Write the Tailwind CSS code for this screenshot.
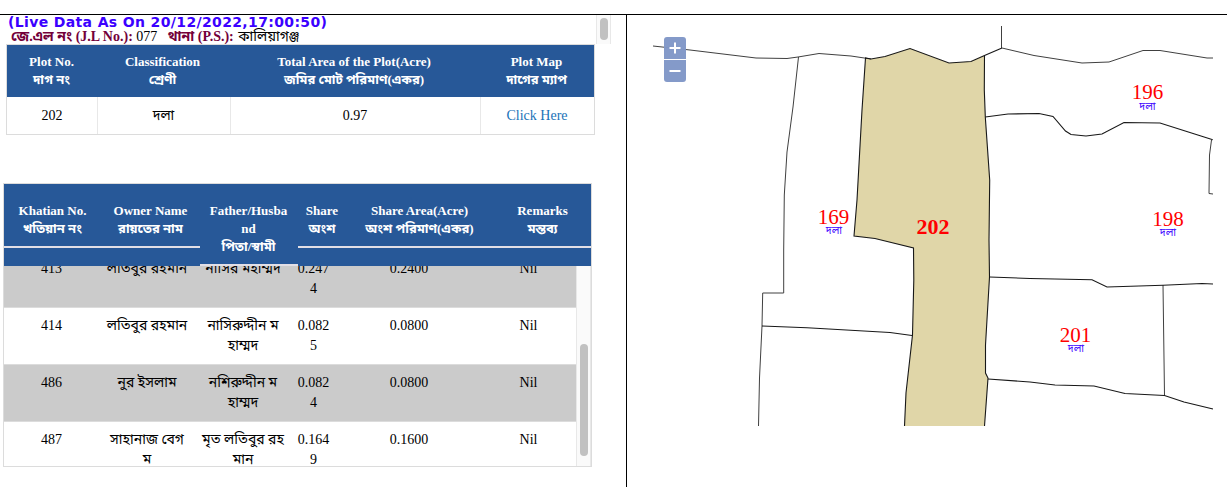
<!DOCTYPE html>
<html lang="bn">
<head>
<meta charset="utf-8">
<title>Plot Information</title>
<script src="https://cdn.jsdelivr.net/npm/@tailwindcss/browser@4"></script>
</head>
<body class="h-[488px] overflow-hidden bg-white pt-[14px] font-['Liberation_Serif','Noto_Sans_Bengali','Noto_Sans',serif] text-black">
<main class="flex h-[473px] border-t border-black">
  <section class="w-[627px] shrink-0 border-r border-black">
    <div class="flex h-[29px] justify-between pr-[15px] pl-2">
      <div class="whitespace-nowrap">
        <div class="h-[14px] font-['DejaVu_Sans'] text-[14px] leading-[14px] font-bold tracking-[0.36px] text-[#3b00ff]">(Live Data As On 20/12/2022,17:00:50)</div>
        <div class="pl-[3px] text-[14px] leading-[15px]"><b class="text-[#730039]">জে.এল নং (J.L No.):</b> 077 &nbsp; <b class="text-[#730039]">থানা (P.S.):</b> <span class="pl-px">কালিয়াগঞ্জ</span></div>
      </div>
      <div class="h-[29px] w-[15px] border-x border-[#e8e8e8] bg-[#fafafa] px-[3px] pt-[3px]"><div class="h-[22px] w-2 rounded-full bg-[#c1c1c1]"></div></div>
    </div>

    <div class="ml-[6px] w-[589px] border border-[#dcdcdc] text-center">
      <div class="grid h-[52px] grid-cols-[89px_133px_250px_115px] bg-[#275898] pt-2 text-[13px] leading-[18px] font-bold whitespace-nowrap text-white">
        <div>Plot No.<br>দাগ নং</div><div>Classification<br>শ্রেণী</div><div>Total Area of the Plot(Acre)<br>জমির মোট পরিমাণ(একর)</div><div>Plot Map<br>দাগের ম্যাপ</div>
      </div>
      <div class="grid h-[37px] grid-cols-[91px_133px_250px_113px] text-[14px] leading-[37px]">
        <div class="border-r border-[#e8e8e8]">202</div><div class="border-r border-[#e8e8e8] pr-px">দলা</div><div class="border-r border-[#e8e8e8] pr-px">0.97</div><div class="pr-px text-[#1a73b8]">Click Here</div>
      </div>
    </div>

    <div class="mt-12 ml-[3px] h-[284px] w-[589px] overflow-hidden border border-[#dcdcdc] text-center">
      <div class="grid h-[82px] grid-cols-[98px_98px_98px_48px_148px_97px] items-start bg-[#275898] text-[13px] leading-[18px] font-bold whitespace-nowrap text-white">
        <div class="h-16 border-b-2 border-[#e2dfe6] pt-[18px] pr-px">Khatian No.<br>খতিয়ান নং</div>
        <div class="h-16 border-b-2 border-[#e2dfe6] pt-[18px] pr-px">Owner Name<br>রায়তের নাম</div>
        <div class="h-[82px] border-b-2 border-[#e2dfe6] pt-[18px] pr-px">Father/Husba<br>nd<br>পিতা/স্বামী</div>
        <div class="h-16 border-b-2 border-[#e2dfe6] pt-[18px]">Share<br>অংশ</div>
        <div class="h-16 border-b-2 border-[#e2dfe6] pt-[18px] pr-px">Share Area(Acre)<br>অংশ পরিমাণ(একর)</div>
        <div class="h-16 border-b-2 border-[#e2dfe6] pt-[18px]">Remarks<br>মন্তব্য</div>
      </div>
      <div class="flex h-[200px] overflow-hidden">
        <div class="-mt-[15px] w-[572px] text-[14px] leading-5 whitespace-nowrap">
          <div class="grid h-[57px] grid-cols-[95px_96px_96px_45px_146px_93px] border-b border-[#dcdcdc] bg-[#cbcbcb] pt-2"><div>413</div><div>লতিবুর রহমান</div><div>নাসির মহাম্মদ</div><div>0.247<br>4</div><div>0.2400</div><div>Nil</div></div>
          <div class="grid h-[57px] grid-cols-[95px_96px_96px_45px_146px_93px] border-b border-[#dcdcdc] pt-2"><div>414</div><div>লতিবুর রহমান</div><div>নাসিরুদ্দীন ম<br>হাম্মদ</div><div>0.082<br>5</div><div>0.0800</div><div>Nil</div></div>
          <div class="grid h-[57px] grid-cols-[95px_96px_96px_45px_146px_93px] border-b border-[#dcdcdc] bg-[#cbcbcb] pt-2"><div>486</div><div>নুর ইসলাম</div><div>নশিরুদ্দীন ম<br>হাম্মদ</div><div>0.082<br>4</div><div>0.0800</div><div>Nil</div></div>
          <div class="grid h-[57px] grid-cols-[95px_96px_96px_45px_146px_93px] pt-2"><div>487</div><div>সাহানাজ বেগ<br>ম</div><div>মৃত লতিবুর রহ<br>মান</div><div>0.164<br>9</div><div>0.1600</div><div>Nil</div></div>
        </div>
        <div class="w-[15px] border-x border-[#e8e8e8] bg-[#fafafa] px-[3px] pt-[78px]"><div class="h-28 w-2 rounded-full bg-[#c1c1c1]"></div></div>
      </div>
    </div>
  </section>

  <section class="relative w-[600px]">
    <svg class="block h-[473px] w-[600px]" viewBox="627 15 600 473" fill="none">
      <path fill="#e0d6a8" d="M865.5 58L871 59L885 56.5L910 48.5L949 63L971 61.5L984.5 55.5L984.3 90L985.3 117L989.7 180L989 240L989.5 277L985.5 345V373L988 378L984.5 426H904.5L906 393L912.5 335L913.8 280L913.5 248L875 238.5L854 236L857 200L862 110Z"/>
      <g stroke="#404040" stroke-width="1">
        <path d="M653 46L690 50L756 58L787 58.5L798 57L819 53.5L851 56L871 59M1002 48L1034 55.5L1082 63L1109 62L1143 50.5H1160L1207 58H1213M1001.5 26V48"/>
        <path d="M798.5 57L793 107L787 152L784.3 195L783.7 250V293H762.7L762 326L759.5 378L758.5 426"/>
        <path d="M1213 139.5L1211.5 140L1209.5 155L1209 193.5L1213 194M1163 285L1164.5 395.5"/>
      </g>
      <g stroke="#181818" stroke-width="1.1">
        <path d="M904.5 426L906 393L912.5 335L913.8 280L913.5 248L875 238.5L854 236L857 200L862 110L865.5 58L871 59L885 56.5L910 48.5L949 63L971 61.5L984.5 55.5L1002 48M984.5 55.5L984.3 90L985.3 117L989.7 180L989 240L989.5 277L985.5 345V373L988 378L984.5 426"/>
        <path d="M762 326L807 327.7L890 332.5L912 335.5M985.3 117L1008 114L1039 113.5L1053 116.5L1065.5 131L1071 134.5L1086 136L1102 134L1124 122.5L1160 123L1212 139.5"/>
        <path d="M989.5 277L1030 278.5L1092 279.8L1107 287L1163 285.3L1202 283.5L1213 284M988 379L1030 382L1055 385L1094 386L1125 393.5L1164.5 395.5L1184 402L1213 409"/>
      </g>
      <g class="text-[21px]" fill="#f00" text-anchor="middle">
        <text x="833.5" y="224">169</text><text x="1147.5" y="99">196</text><text x="1168" y="226">198</text><text x="1075.5" y="342">201</text>
        <text class="text-[22px] font-bold" x="933" y="234">202</text>
      </g>
      <g class="text-[10.5px]" fill="#3b00ff" text-anchor="middle">
        <text x="834" y="234">দলা</text><text x="1147.5" y="110">দলা</text><text x="1168" y="236">দলা</text><text x="1076" y="352">দলা</text>
      </g>
    </svg>
    <div class="absolute top-[22px] left-[37px] flex w-[22px] flex-col gap-px bg-white/50">
      <div class="flex h-[22px] items-center justify-center rounded-t-[3px] bg-[#7d95c6]/95"><svg class="h-3 w-3" viewBox="0 0 12 12" stroke="#fff" stroke-width="2"><path d="M6 0.5V11.5M0.5 6H11.5"/></svg></div>
      <div class="flex h-[22px] items-center justify-center rounded-b-[3px] bg-[#7d95c6]/95"><svg class="h-3 w-3" viewBox="0 0 12 12" stroke="#fff" stroke-width="2"><path d="M0.5 6H11.5"/></svg></div>
    </div>
  </section>
</main>
</body>
</html>
